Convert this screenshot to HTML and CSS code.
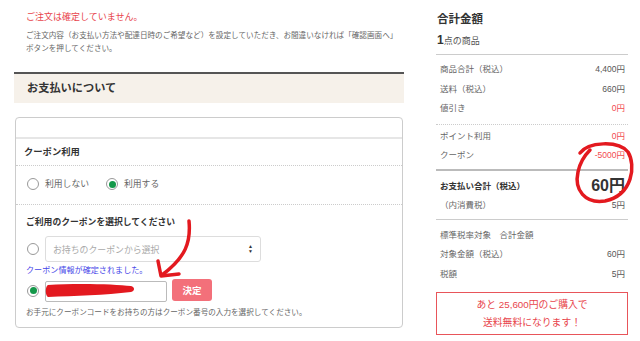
FILE: index.html
```html
<!DOCTYPE html>
<html lang="ja">
<head>
    <meta charset="UTF-8">
    <meta name="viewport" content="width=device-width, initial-scale=1.0">
    <title>ご注文手続き</title>
    <link rel="stylesheet" href="styles.css">
</head>
<body>
    <div class="page">
        <main class="main">
            <p class="alert">ご注文は確定していません。</p>
            <p class="lead">ご注文内容（お支払い方法や配達日時のご希望など）を設定していただき、お間違いなければ「確認画面へ」<br>ボタンを押してください。</p>

            <h2 class="section-head">お支払いについて</h2>

            <div class="card">
                <div class="card-top"></div>
                <h3 class="card-title">クーポン利用</h3>
                <div class="choice">
                    <label class="radio"><span class="dot"></span>利用しない</label>
                    <label class="radio"><span class="dot on"></span>利用する</label>
                </div>
                <div class="coupon">
                    <h4>ご利用のクーポンを選択してください</h4>
                    <div class="coupon-row">
                        <span class="dot"></span>
                        <div class="select">お持ちのクーポンから選択<span class="arrows"><i>▲</i><i>▼</i></span></div>
                    </div>
                    <p class="notice">クーポン情報が確定されました。</p>
                    <div class="coupon-row">
                        <span class="dot on"></span>
                        <div class="code">
                            <!-- 塗りつぶし -->
                            <svg class="scribble" width="100" height="20" viewBox="0 0 100 20">
                                <path d="M3 4 C 30 2, 70 3, 86 5 C 90 6, 90 10, 86 11 C 60 14, 30 15, 3 16 C 0 15, 0 5, 3 4 Z" fill="#e3191f"/>
                            </svg>
                        </div>
                        <button class="submit">決定</button>
                    </div>
                    <p class="help">お手元にクーポンコードをお持ちの方はクーポン番号の入力を選択してください。</p>
                </div>
            </div>
        </main>

        <aside class="summary">
            <h2 class="sum-title">合計金額</h2>
            <p class="count"><b>1</b>点の商品</p>

            <dl class="group solid">
                <div class="row"><dt>商品合計（税込）</dt><dd>4,400円</dd></div>
                <div class="row"><dt>送料（税込）</dt><dd>660円</dd></div>
                <div class="row"><dt>値引き</dt><dd class="red">0円</dd></div>
            </dl>
            <dl class="group dotted">
                <div class="row"><dt>ポイント利用</dt><dd class="red">0円</dd></div>
                <div class="row"><dt>クーポン</dt><dd class="red">-5000円</dd></div>
            </dl>
            <dl class="group thick">
                <div class="row total"><dt>お支払い合計（税込）</dt><dd>60円</dd></div>
                <div class="row sub"><dt>（内消費税）</dt><dd>5円</dd></div>
            </dl>
            <dl class="group tax">
                <div class="row"><dt>標準税率対象　合計金額</dt><dd></dd></div>
                <div class="row"><dt>対象金額（税込）</dt><dd>60円</dd></div>
                <div class="row"><dt>税額</dt><dd>5円</dd></div>
            </dl>

            <div class="free-ship">あと 25,600円のご購入で<br>送料無料になります！</div>
        </aside>

        <!-- 手書きの注釈 -->
        <svg class="marks" width="640" height="341" viewBox="0 0 640 341">
            <g stroke="#e3191f" stroke-width="3.5" stroke-linecap="round" stroke-linejoin="round" fill="none">
                <path d="M189 221 C 191 242, 186 257, 162 275"/>
                <path d="M158 261 L161 276 L179 274"/>
                <path d="M580 153 C 588 142, 618 140, 628 152 C 636 165, 633 195, 605 201 C 585 204, 574 190, 578 172 C 580 162, 584 156, 590 150"/>
            </g>
        </svg>
    </div>
</body>
</html>
```

FILE: styles.css
```css
body {
    margin: 0;
    font-family: "Liberation Sans", "Noto Sans CJK JP", sans-serif;
    color: #555;
    background: #fff;
    overflow: hidden;
}
p, h2, h3, h4, dl, dd {
    margin: 0;
}
.page {
    position: relative;
    display: flex;
    gap: 32px;
    width: 640px;
    height: 341px;
}

/* 左側 */
.main {
    width: 390px;
    margin-left: 14px;
}
.alert {
    margin-top: 10px;
    padding-left: 12px;
    font-size: 9px;
    line-height: 14px;
    color: #e8454c;
}
.lead {
    margin-top: 5px;
    padding-left: 12px;
    font-size: 7.6px;
    line-height: 13px;
    white-space: nowrap;
    color: #666;
}
.section-head {
    margin-top: 17px;
    height: 29px;
    border-top: 2px solid #555;
    background-color: #f6f1ea;
    padding-left: 13px;
    font-size: 11.2px;
    line-height: 29px;
    color: #333;
}
.card {
    margin: 14px 0 0 1px;
    width: 386px;
    border: 1px solid #ccc;
    border-radius: 4px;
}
.card-top {
    height: 19px;
    border-bottom: 2px solid #e6e6e6;
}
.card-title {
    height: 26px;
    padding-left: 8px;
    font-size: 9.3px;
    line-height: 26px;
    color: #333;
    border-bottom: 1px dotted #ccc;
}
.choice {
    display: flex;
    gap: 17px;
    padding: 11px 0 13px 11px;
    border-bottom: 1px dotted #ccc;
}
.radio {
    display: flex;
    align-items: center;
    gap: 6px;
    font-size: 8.8px;
    line-height: 14px;
    color: #666;
}
.dot {
    position: relative;
    display: inline-block;
    flex: none;
    width: 10px;
    height: 10px;
    border: 1.5px solid #999;
    border-radius: 50%;
    background: #fff;
}
.dot.on::after {
    content: "";
    position: absolute;
    left: 1.5px;
    top: 1.5px;
    width: 7px;
    height: 7px;
    border-radius: 50%;
    background: #14984a;
}
.coupon {
    padding: 10px 0 8px 10px;
}
.coupon h4 {
    font-size: 8.8px;
    line-height: 14px;
    color: #333;
}
.coupon-row {
    display: flex;
    align-items: center;
    margin-top: 7px;
    padding-left: 1px;
}
.coupon-row .dot {
    margin-right: 6px;
}
.select {
    display: flex;
    align-items: center;
    justify-content: space-between;
    box-sizing: border-box;
    width: 216px;
    height: 26px;
    padding: 0 7px;
    border: 1px solid #ddd;
    border-radius: 3px;
    font-size: 8.9px;
    color: #aaa;
}
.arrows {
    display: flex;
    flex-direction: column;
    font-size: 5px;
    line-height: 5px;
    color: #333;
}
.arrows i {
    font-style: normal;
}
.notice {
    margin-top: 3px;
    font-size: 8.1px;
    line-height: 12px;
    color: #4646e8;
}
.notice + .coupon-row {
    margin-top: 2px;
    height: 23px;
}
.code {
    position: relative;
    box-sizing: border-box;
    width: 122px;
    height: 21px;
    margin-top: 2px;
    border: 1px solid #bbb;
    border-radius: 2px;
}
.scribble {
    position: absolute;
    left: -1px;
    top: -1px;
}
.submit {
    width: 40px;
    height: 22px;
    margin: -1px 0 0 5px;
    padding: 0;
    border: none;
    border-radius: 3px;
    background-color: #f3707a;
    font-family: inherit;
    font-size: 9.5px;
    font-weight: bold;
    color: #fff;
}
.help {
    margin-top: 5px;
    font-size: 7.6px;
    line-height: 12px;
    white-space: nowrap;
    color: #666;
}

/* 右側 */
.summary {
    width: 192px;
}
.sum-title {
    margin-top: 11px;
    padding-left: 1px;
    font-size: 11.5px;
    line-height: 16px;
    color: #333;
}
.count {
    margin-top: 5px;
    padding: 0 0 5px 1px;
    font-size: 9px;
    line-height: 16px;
    border-bottom: 1px solid #ccc;
}
.count b {
    font-size: 12px;
    color: #333;
}
.group {
    padding: 5px 3px 5px 4px;
}
.group.dotted {
    padding-top: 2px;
    padding-bottom: 3px;
}
.group.solid {
    border-bottom: 1px dotted #ccc;
}
.group.dotted {
    border-bottom: 2px solid #bbb;
}
.group.thick {
    padding-top: 4px;
    border-bottom: 1px solid #ccc;
}
.group.tax {
    padding-top: 6px;
    padding-bottom: 0;
}
.row {
    display: flex;
    justify-content: space-between;
    font-size: 8.5px;
    line-height: 19.5px;
    color: #666;
}
.row dd {
    color: #555;
}
.row dd.red {
    color: #f2484e;
}
.row.total {
    line-height: 22px;
}
.row.total dt {
    font-weight: bold;
    color: #333;
}
.row.total dd {
    font-size: 16px;
    font-weight: bold;
    color: #333;
}
.row.sub {
    line-height: 17px;
}
.free-ship {
    margin-top: 8px;
    padding: 3px 0 2px;
    border: 1px solid #e8555a;
    text-align: center;
    font-size: 9.8px;
    line-height: 18px;
    color: #e8454c;
}

/* 注釈 */
.marks {
    position: absolute;
    left: 0;
    top: 0;
    pointer-events: none;
}
```
